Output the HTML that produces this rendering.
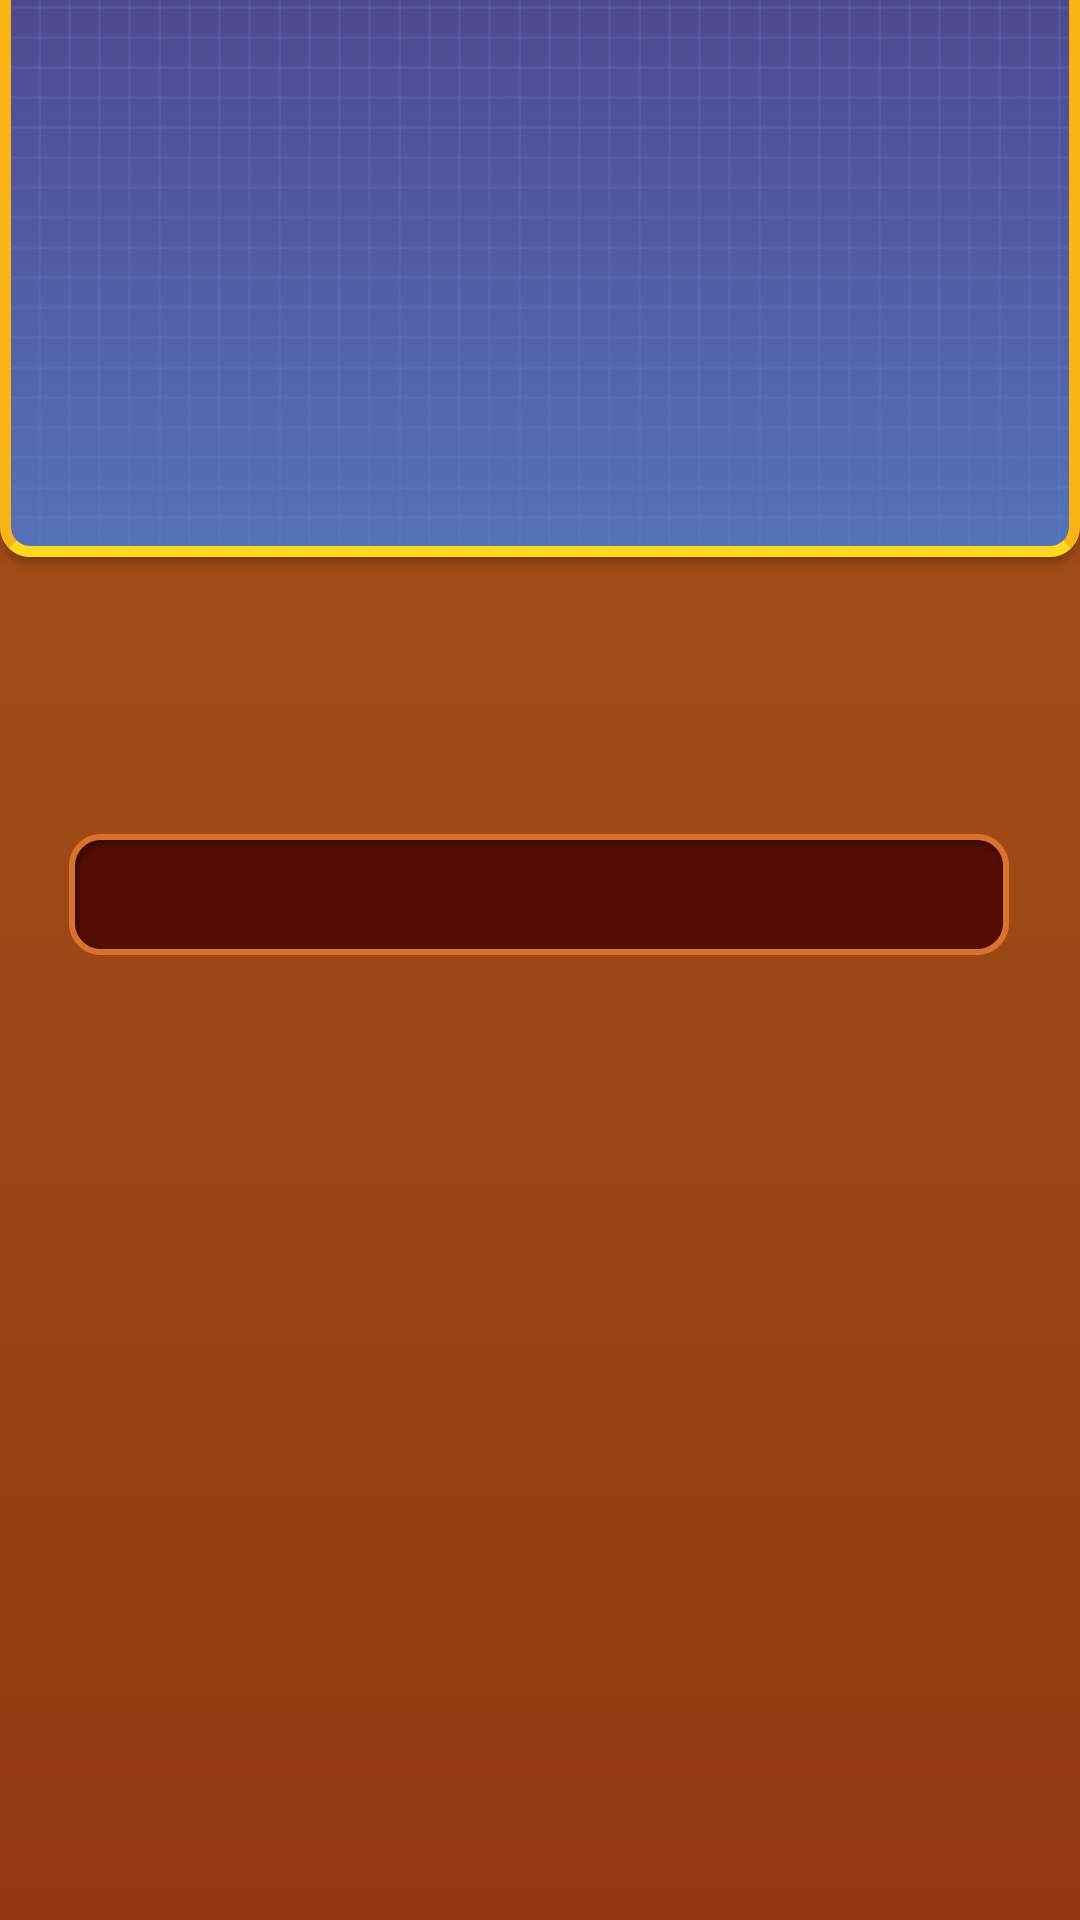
<!DOCTYPE html>
<html><head><style>
html,body{margin:0;padding:0}
body{width:1080px;height:1920px;position:relative;overflow:hidden;background:linear-gradient(#a4521b 0%,#a04a17 40%,#933812 100%)}
.panel{position:absolute;left:0;top:-30px;width:1080px;height:587px;box-sizing:border-box;border:11px solid #f9b515;border-top:none;border-bottom-color:#ffd820;border-radius:0 0 30px 30px;box-shadow:0 6px 10px rgba(80,30,0,.45);background:
repeating-linear-gradient(90deg,rgba(255,255,255,0) 0 27px,rgba(110,130,210,.18) 27px 30px),
repeating-linear-gradient(0deg,rgba(255,255,255,0) 0 27px,rgba(110,130,210,.18) 27px 30px),
linear-gradient(#4f468d,#5472b9)}
.bar{position:absolute;left:69px;top:834px;width:940px;height:121px;box-sizing:border-box;border:6px solid #d9722c;border-radius:32px;background:#540d05;box-shadow:inset 3px 4px 6px rgba(0,0,0,.35)}
</style></head><body>
<div class="panel"></div>
<div class="bar"></div>
</body></html>
